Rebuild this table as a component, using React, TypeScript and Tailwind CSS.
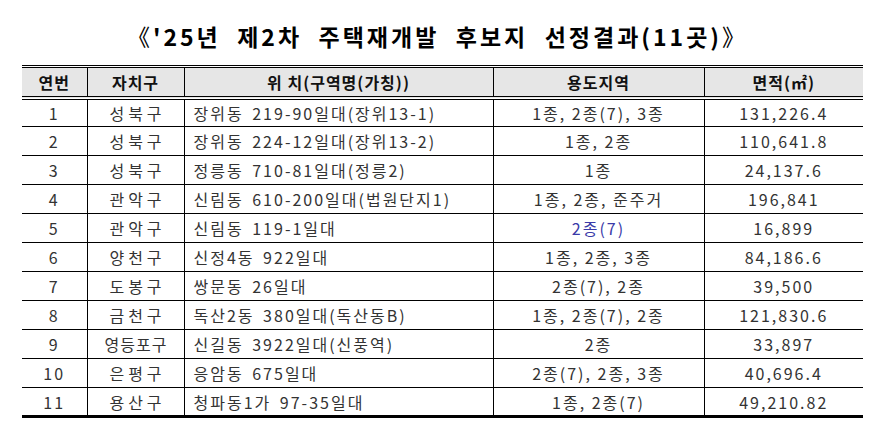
const rows = [
  { no: "1", gu: "성북구", loc: "장위동 219-90일대(장위13-1)", zone: "1종, 2종(7), 3종", area: "131,226.4" },
  { no: "2", gu: "성북구", loc: "장위동 224-12일대(장위13-2)", zone: "1종, 2종", area: "110,641.8" },
  { no: "3", gu: "성북구", loc: "정릉동 710-81일대(정릉2)", zone: "1종", area: "24,137.6" },
  { no: "4", gu: "관악구", loc: "신림동 610-200일대(법원단지1)", zone: "1종, 2종, 준주거", area: "196,841" },
  { no: "5", gu: "관악구", loc: "신림동 119-1일대", zone: "2종(7)", area: "16,899", blue: true },
  { no: "6", gu: "양천구", loc: "신정4동 922일대", zone: "1종, 2종, 3종", area: "84,186.6" },
  { no: "7", gu: "도봉구", loc: "쌍문동 26일대", zone: "2종(7), 2종", area: "39,500" },
  { no: "8", gu: "금천구", loc: "독산2동 380일대(독산동B)", zone: "1종, 2종(7), 2종", area: "121,830.6" },
  { no: "9", gu: "영등포구", loc: "신길동 3922일대(신풍역)", zone: "2종", area: "33,897" },
  { no: "10", gu: "은평구", loc: "응암동 675일대", zone: "2종(7), 2종, 3종", area: "40,696.4" },
  { no: "11", gu: "용산구", loc: "청파동1가 97-35일대", zone: "1종, 2종(7)", area: "49,210.82" },
];

const font = "font-['Noto_Sans_CJK_KR',sans-serif]";

export default function App() {
  return (
    <div className={`w-[875px] h-[448px] bg-white text-[#333] ${font}`}>
      <h1 className="pt-[19px] h-[65px] text-center text-[23px] font-bold leading-[34px] tracking-[3px] text-black">
        <span className="font-normal">《</span>'25년&nbsp; 제2차&nbsp; 주택재개발&nbsp; 후보지&nbsp; 선정결과(11곳)<span className="font-normal">》</span>
      </h1>
      <table className="ml-[22px] w-[841px] border-collapse table-fixed text-[16px] tracking-[2px]">
        <colgroup>
          <col className="w-[65px]" />
          <col className="w-[97px]" />
          <col className="w-[309px]" />
          <col className="w-[211px]" />
          <col className="w-[159px]" />
        </colgroup>
        <thead>
          <tr className="h-[31px] bg-[#e6e6e6] border-t-[3px] border-b-[4px] border-double border-black text-[#111]">
            <th className="border-r border-black font-semibold tracking-[1px]">연번</th>
            <th className="border-r border-black font-semibold tracking-[1px]">자치구</th>
            <th className="border-r border-black font-semibold tracking-[1px]">위 치(구역명(가칭))</th>
            <th className="border-r border-black font-semibold tracking-[1px]">용도지역</th>
            <th className="font-semibold tracking-[1px]">면적(㎡)</th>
          </tr>
        </thead>
        <tbody>
          {rows.map((r, i) => (
            <tr
              key={r.no}
              className={`h-[29px] leading-[20px] ${i === rows.length - 1 ? "border-b-[3px]" : "border-b"} border-black`}
            >
              <td className="border-r border-black text-center p-0">{r.no}</td>
              <td
                className={`border-r border-black text-center p-0 ${r.gu.length > 3 ? "tracking-[1px] pl-[1px]" : "tracking-[4px] pl-[4px]"}`}
              >
                {r.gu}
              </td>
              <td className="border-r border-black text-left pl-[9px] p-0 [word-spacing:3px]">{r.loc}</td>
              <td className={`border-r border-black text-center p-0 ${r.blue ? "text-[#3a3aa8]" : ""}`}>{r.zone}</td>
              <td className="text-center p-0">{r.area}</td>
            </tr>
          ))}
        </tbody>
      </table>
    </div>
  );
}
